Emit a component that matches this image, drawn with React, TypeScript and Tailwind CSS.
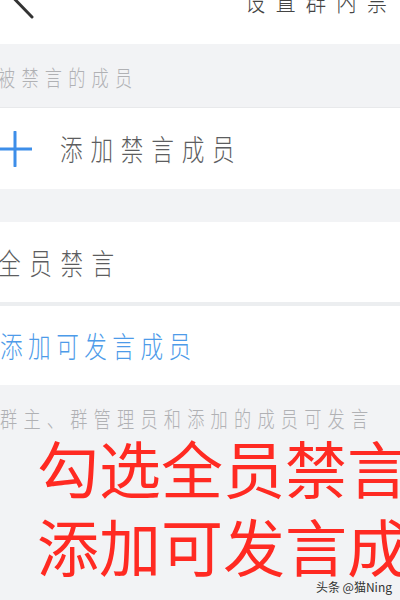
import React from "react";

const cjk = "font-['Noto_Sans_CJK_SC','Noto_Sans',sans-serif]";

export default function App() {
  return (
    <div className={`relative w-[400px] h-[600px] overflow-hidden bg-[#f2f3f5] ${cjk}`}>
      {/* header */}
      <div className="h-[44px] bg-white overflow-hidden">
        <div className="h-[44px] -mt-[22px] flex items-center">
          <svg width="40" height="44" viewBox="0 0 40 44" className="shrink-0">
            <path d="M32 3 L14.5 21 L32 39" fill="none" stroke="#333" strokeWidth="3" strokeLinecap="round" strokeLinejoin="round" />
          </svg>
          <span className="ml-[205px] inline-block origin-left scale-x-[0.78] whitespace-nowrap text-[26px] leading-none tracking-[13px] text-[#444] font-light">
            设置群内禁言
          </span>
        </div>
      </div>

      {/* section title */}
      <div className="h-[64px] flex items-center border-b border-[#e8e9eb]">
        <span className="-ml-[2px] inline-block origin-left scale-x-[0.78] whitespace-nowrap text-[22px] leading-none tracking-[8px] text-[#b0b1b4] font-light">
          被禁言的成员
        </span>
      </div>

      {/* add muted member */}
      <div className="h-[81px] bg-white flex items-center">
        <svg width="34" height="36" viewBox="0 0 34 36" className="shrink-0 -ml-[2px]">
          <path d="M17 1 V35 M0 18 H34" stroke="#3d8ee9" strokeWidth="3" strokeLinecap="round" />
        </svg>
        <span className="ml-[28px] inline-block origin-left scale-x-[0.78] whitespace-nowrap text-[29px] leading-none tracking-[10px] text-[#5c5d60] font-light">
          添加禁言成员
        </span>
      </div>

      <div className="h-[33px]" />

      {/* all muted */}
      <div className="h-[80px] bg-white flex items-center">
        <span className="-ml-[2px] inline-block origin-left scale-x-[0.78] whitespace-nowrap text-[29px] leading-none tracking-[11px] text-[#5c5d60] font-light">
          全员禁言
        </span>
      </div>
      <div className="h-[4px] bg-[#eceef0]" />
      <div className="h-[79px] bg-white flex items-center">
        <span className="inline-block origin-left scale-x-[0.78] whitespace-nowrap text-[29px] leading-none tracking-[7px] text-[#4d9be9] font-light">
          添加可发言成员
        </span>
      </div>

      {/* note */}
      <div className="pt-[21px] flex">
        <span className="inline-block origin-left scale-x-[0.78] whitespace-nowrap text-[22px] leading-none tracking-[8px] text-[#b0b1b4] font-light">
          群主、群管理员和添加的成员可发言
        </span>
      </div>

      {/* red annotation */}
      <div className="pl-[37px] text-[62px] leading-[78px] text-[#ff2a22] whitespace-nowrap">
        <div>勾选全员禁言</div>
        <div>添加可发言成员</div>
      </div>

      {/* watermark */}
      <div className="absolute right-[8px] bottom-[7px] text-[12px] leading-none text-[#333] whitespace-nowrap">
        头条 @猫Ning
      </div>
    </div>
  );
}
